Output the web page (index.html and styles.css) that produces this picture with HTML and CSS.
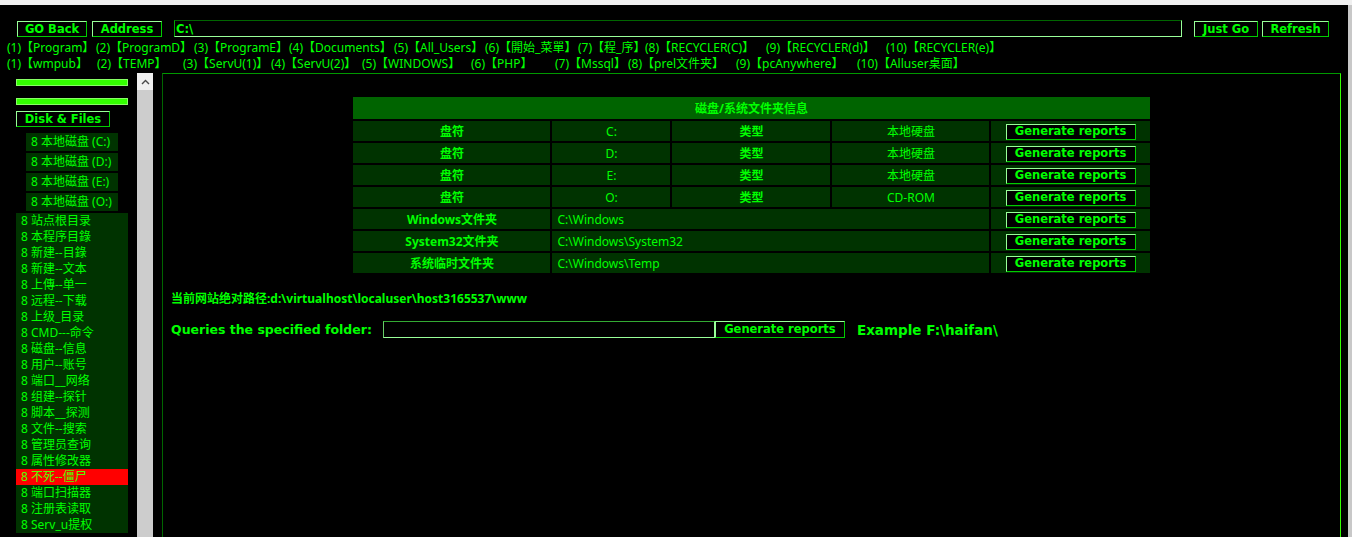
FILE: index.html
```html
<!DOCTYPE html>
<html lang="zh">
<head>
<meta charset="utf-8">
<title>File Manager</title>
<link rel="stylesheet" href="styles.css">
</head>
<body>
<div class="topstrip"></div>
<div class="window">
  <div class="content">
    <form class="toolbar">
      <button type="button" class="btn btn-back">GO Back</button>
      <button type="button" class="btn btn-addr">Address</button>
      <input class="addr" type="text" value="C:\">
      <button type="button" class="btn btn-go">Just Go</button>
      <button type="button" class="btn btn-refresh">Refresh</button>
    </form>
    <div class="links row1">
      <a>(1)【Program】</a><a>(2)【ProgramD】</a><a>(3)【ProgramE】</a><a>(4)【Documents】</a><a>(5)【All_Users】</a><a>(6)【開始_菜單】</a><a>(7)【程_序】</a><a>(8)【RECYCLER(C)】</a><a>(9)【RECYCLER(d)】</a><a>(10)【RECYCLER(e)】</a>
    </div>
    <div class="links row2">
      <a>(1)【wmpub】</a><a>(2)【TEMP】</a><a>(3)【ServU(1)】</a><a>(4)【ServU(2)】</a><a>(5)【WINDOWS】</a><a>(6)【PHP】</a><a>(7)【Mssql】</a><a>(8)【prel文件夹】</a><a>(9)【pcAnywhere】</a><a>(10)【Alluser桌面】</a>
    </div>
    <div class="panes">
      <aside class="left">
        <div class="left-content">
          <div class="bar bar1"></div>
          <div class="bar bar2"></div>
          <button type="button" class="btn btn-disk">Disk &amp; Files</button>
          <ul class="disks">
            <li>8 本地磁盘 (C:)</li>
            <li>8 本地磁盘 (D:)</li>
            <li>8 本地磁盘 (E:)</li>
            <li>8 本地磁盘 (O:)</li>
          </ul>
          <ul class="menu">
            <li>8 站点根目录</li>
            <li>8 本程序目錄</li>
            <li>8 新建--目錄</li>
            <li>8 新建--文本</li>
            <li>8 上傳--单一</li>
            <li>8 远程--下载</li>
            <li>8 上级_目录</li>
            <li>8 CMD---命令</li>
            <li>8 磁盘--信息</li>
            <li>8 用户--账号</li>
            <li>8 端口__网络</li>
            <li>8 组建--探针</li>
            <li>8 脚本__探测</li>
            <li>8 文件--搜索</li>
            <li>8 管理员查询</li>
            <li>8 属性修改器</li>
            <li class="active">8 不死--僵尸</li>
            <li>8 端口扫描器</li>
            <li>8 注册表读取</li>
            <li>8 Serv_u提权</li>
          </ul>
        </div>
        <div class="vscroll">
          <div class="vscroll-up">
            <svg width="9" height="6" viewBox="0 0 9 6"><path d="M1 5 L4.5 1.5 L8 5" fill="none" stroke="#4a4a4a" stroke-width="1.4"/></svg>
          </div>
        </div>
      </aside>
      <main class="main">
        <table class="info">
          <colgroup>
            <col class="c1"><col class="c2"><col class="c3"><col class="c4"><col class="c5">
          </colgroup>
          <thead>
            <tr><th colspan="5">磁盘/系统文件夹信息</th></tr>
          </thead>
          <tbody>
            <tr><td class="b">盘符</td><td>C:</td><td class="b">类型</td><td>本地硬盘</td><td><button type="button" class="btn btn-rep">Generate reports</button></td></tr>
            <tr><td class="b">盘符</td><td>D:</td><td class="b">类型</td><td>本地硬盘</td><td><button type="button" class="btn btn-rep">Generate reports</button></td></tr>
            <tr><td class="b">盘符</td><td>E:</td><td class="b">类型</td><td>本地硬盘</td><td><button type="button" class="btn btn-rep">Generate reports</button></td></tr>
            <tr><td class="b">盘符</td><td>O:</td><td class="b">类型</td><td>CD-ROM</td><td><button type="button" class="btn btn-rep">Generate reports</button></td></tr>
            <tr><td class="b">Windows文件夹</td><td colspan="3" class="l">C:\Windows</td><td><button type="button" class="btn btn-rep">Generate reports</button></td></tr>
            <tr><td class="b">System32文件夹</td><td colspan="3" class="l">C:\Windows\System32</td><td><button type="button" class="btn btn-rep">Generate reports</button></td></tr>
            <tr><td class="b">系统临时文件夹</td><td colspan="3" class="l">C:\Windows\Temp</td><td><button type="button" class="btn btn-rep">Generate reports</button></td></tr>
          </tbody>
        </table>
        <p class="path">当前网站绝对路径:d:\virtualhost\localuser\host3165537\www</p>
        <form class="query">
          <label class="q-label">Queries the specified folder:</label>
          <input class="q-input" type="text">
          <button type="button" class="btn btn-rep btn-q">Generate reports</button>
          <span class="q-example">Example F:\haifan\</span>
        </form>
      </main>
    </div>
  </div>
  <div class="outer-scroll"></div>
</div>
</body>
</html>
```

FILE: styles.css
```css
* { box-sizing: border-box; }

html, body {
  margin: 0;
  padding: 0;
  background: #000;
  width: 1352px;
  height: 537px;
  overflow: hidden;
}

body {
  font-family: "Noto Sans", "Noto Sans CJK SC", sans-serif;
  font-size: 12px;
  color: #00ff00;
}

.topstrip {
  height: 5px;
  background: #f0f0f0;
}

.window {
  display: flex;
  height: 532px;
}

.content {
  width: 1348px;
  display: flex;
  flex-direction: column;
}

.outer-scroll {
  width: 4px;
  background: #c8c8c8;
}

/* buttons */
.btn {
  font-family: "DejaVu Sans", sans-serif;
  font-weight: bold;
  font-size: 11.5px;
  color: #00ff00;
  background: #000;
  border: 1px solid;
  border-color: #99ff99 #00cc00 #00cc00 #99ff99;
  height: 16px;
  padding: 0;
  line-height: 13px;
  cursor: pointer;
}

/* toolbar */
.toolbar {
  display: flex;
  align-items: flex-start;
  margin: 0;
  padding: 15px 0 0 17px;
  height: 32px;
  flex: none;
}

.btn-back, .btn-addr { width: 70px; margin-top: 1px; }
.btn-addr { margin-left: 5px; }
.addr {
  margin-left: 12px;
  width: 1008px;
  height: 17px;
  background: #000;
  border: 1px solid;
  border-color: #006600 #99ff99 #99ff99 #00aa00;
  color: #00ff00;
  font-family: "DejaVu Sans", sans-serif;
  font-weight: bold;
  font-size: 11.5px;
  padding: 0 1px;
  outline: none;
}
.btn-go { width: 64px; margin-left: 12px; margin-top: 1px; }
.btn-refresh { width: 67px; margin-left: 4px; margin-top: 1px; }

/* link rows */
.links {
  display: grid;
  padding-left: 7px;
  height: 16px;
  line-height: 16px;
  white-space: nowrap;
  flex: none;
}
.links a { color: #00ff00; text-decoration: none; }
.row1 { margin-top: 3px; grid-template-columns: 89px 98px 95px 105px 91px 93px 67px 121px 120px auto; }
.row2 { grid-template-columns: 90px 86px 88px 91px 109px 84px 73px 108px 121px auto; }

/* panes */
.panes {
  display: flex;
  margin-top: 1px;
  flex: 1;
  min-height: 0;
}

.left {
  width: 153px;
  display: flex;
}
.left-content {
  width: 137px;
  padding-top: 6px;
  overflow: hidden;
}

.bar {
  margin-left: 16px;
  width: 112px;
  height: 7px;
  background: #33ff00;
  border: 1px solid #88ff66;
}
.bar2 { margin-top: 12px; }

.btn-disk {
  display: block;
  margin: 6px 0 0 16px;
  width: 94px;
  height: 16px;
}

.disks, .menu {
  list-style: none;
  margin: 0;
  padding: 0;
}
.disks { margin-top: 6px; }
.disks li {
  margin: 0 0 2px 26px;
  width: 92px;
  height: 18px;
  line-height: 18px;
  padding-left: 5px;
  background: #003300;
  white-space: nowrap;
}
.menu {
  margin-left: 16px;
  width: 112px;
  background: #003300;
}
.menu li {
  height: 16px;
  line-height: 16px;
  padding-left: 5px;
  white-space: nowrap;
}
.menu li.active { background: #ff0000; color: #55ff00; }

.vscroll {
  width: 16px;
  background: #cdcdcd;
}
.vscroll-up {
  height: 17px;
  background: #f0f0f0;
  display: flex;
  align-items: center;
  justify-content: center;
}

.main {
  margin-left: 9px;
  width: 1179px;
  border-top: 1px solid #009900;
  border-left: 1px solid #006600;
  border-right: 1px solid #33ff00;
}

/* info table */
.info {
  width: 800px;
  margin: 21px auto 0;
  border-spacing: 2px;
  table-layout: fixed;
  font-size: 12px;
}
.info .c1 { width: 197px; }
.info .c2 { width: 118px; }
.info .c3 { width: 158px; }
.info .c4 { width: 157px; }
.info .c5 { width: 158px; }
.info th {
  height: 22px;
  background: #006400;
  font-weight: bold;
  text-align: center;
  padding: 0;
}
.info td {
  height: 20px;
  background: #003300;
  text-align: center;
  padding: 0;
  white-space: nowrap;
}
.info td.b { font-weight: bold; }
.info td.l { text-align: left; padding-left: 5px; }

.btn-rep {
  width: 130px;
  height: 16px;
  vertical-align: middle;
}

.path {
  margin: 17px 0 0 8px;
  font-weight: bold;
  line-height: 14px;
}

.query {
  display: flex;
  align-items: center;
  margin: 15px 0 0 8px;
  height: 17px;
}
.q-label {
  font-family: "DejaVu Sans", sans-serif;
  font-weight: bold;
  font-size: 12.5px;
}
.q-input {
  margin-left: 11px;
  width: 332px;
  height: 17px;
  background: #000;
  border: 1px solid;
  border-color: #33aa33 #99ff99 #99ff99 #66cc66;
  outline: none;
}
.btn-q { height: 17px; }
.q-example {
  margin-left: 12px;
  font-family: "DejaVu Sans", sans-serif;
  font-weight: bold;
  font-size: 13.5px;
}
```
